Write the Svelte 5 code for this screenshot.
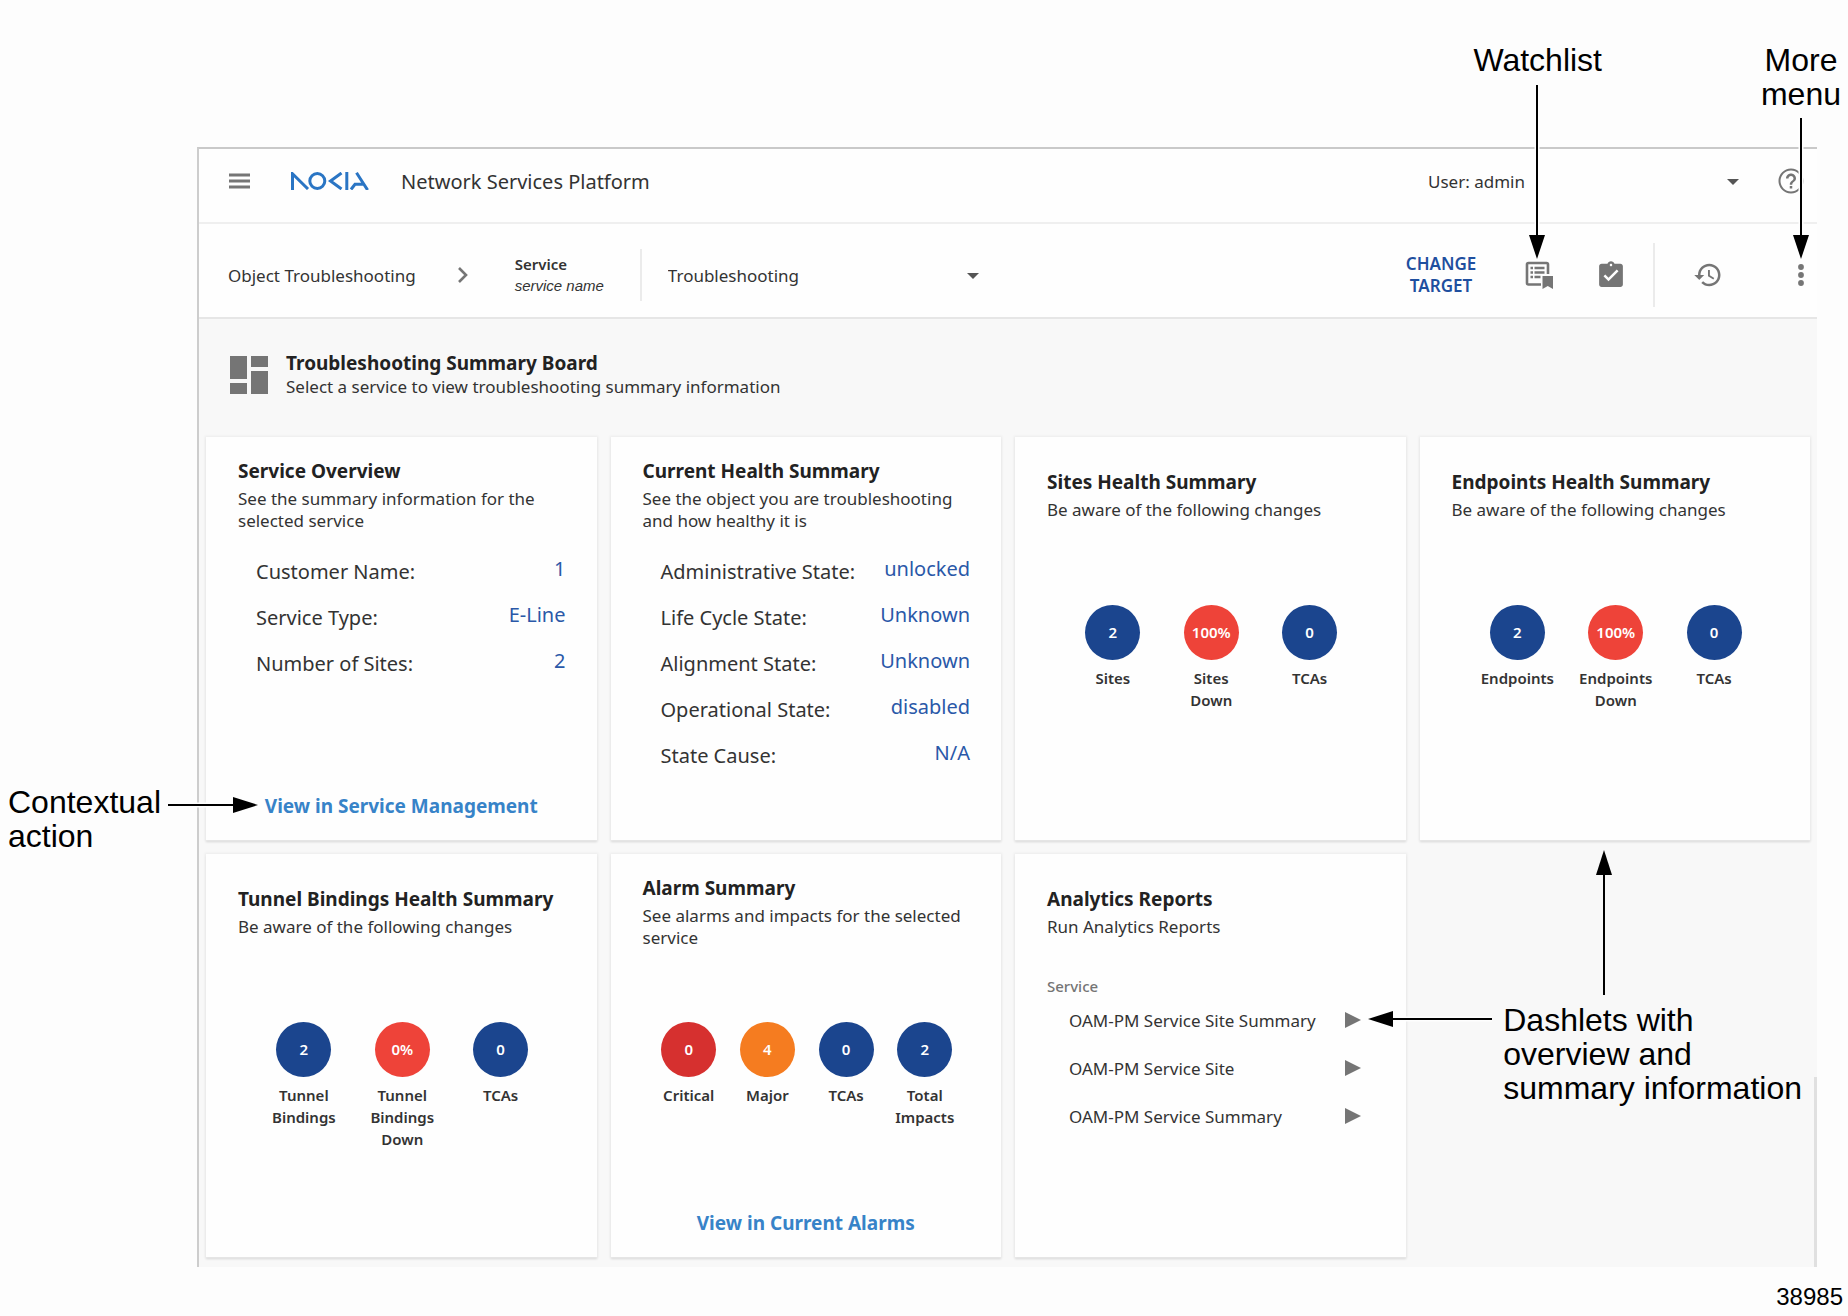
<script>
  const overview = [
    ["Customer Name:", "1"],
    ["Service Type:", "E-Line"],
    ["Number of Sites:", "2"],
  ];

  const health = [
    ["Administrative State:", "unlocked"],
    ["Life Cycle State:", "Unknown"],
    ["Alignment State:", "Unknown"],
    ["Operational State:", "disabled"],
    ["State Cause:", "N/A"],
  ];

  const reports = ["OAM-PM Service Site Summary", "OAM-PM Service Site", "OAM-PM Service Summary"];

  // a card body shows whichever of rows, counts or reports it has
  const dashlets = [
    {
      title: "Service Overview",
      text: "See the summary information for the selected service",
      rows: overview,
      action: "View in Service Management",
    },
    {
      title: "Current Health Summary",
      text: "See the object you are troubleshooting and how healthy it is",
      rows: health,
    },
    {
      title: "Sites Health Summary",
      text: "Be aware of the following changes",
      counts: [
        { value: "2", label: "Sites", tone: "blue" },
        { value: "100%", label: "Sites Down", tone: "red" },
        { value: "0", label: "TCAs", tone: "blue" },
      ],
    },
    {
      title: "Endpoints Health Summary",
      text: "Be aware of the following changes",
      counts: [
        { value: "2", label: "Endpoints", tone: "blue" },
        { value: "100%", label: "Endpoints Down", tone: "red" },
        { value: "0", label: "TCAs", tone: "blue" },
      ],
    },
    {
      title: "Tunnel Bindings Health Summary",
      text: "Be aware of the following changes",
      counts: [
        { value: "2", label: "Tunnel Bindings", tone: "blue" },
        { value: "0%", label: "Tunnel Bindings Down", tone: "red" },
        { value: "0", label: "TCAs", tone: "blue" },
      ],
    },
    {
      title: "Alarm Summary",
      text: "See alarms and impacts for the selected service",
      counts: [
        { value: "0", label: "Critical", tone: "critical" },
        { value: "4", label: "Major", tone: "major" },
        { value: "0", label: "TCAs", tone: "blue" },
        { value: "2", label: "Total Impacts", tone: "blue" },
      ],
      action: "View in Current Alarms",
    },
    {
      title: "Analytics Reports",
      text: "Run Analytics Reports",
      reports,
    },
  ];
</script>

<figure class="figure">
  <div class="app">
    <header class="topbar">
      <button class="icon-btn menu" aria-label="Menu">
        <svg width="21" height="16" viewBox="0 0 21 16"><path d="M0 2h21M0 8h21M0 14h21" stroke="#757575" stroke-width="3" /></svg>
      </button>
      <svg class="logo" width="78" height="18" viewBox="0 0 78 18" role="img" aria-label="Nokia">
        <g fill="none" stroke="#2a75c4" stroke-width="3">
          <path d="M1.5 18V1.8L17 17" />
          <circle cx="26.3" cy="9" r="7.5" />
          <path d="M50.5 1 39.5 9l11 8" />
          <path d="M55.8 0v18" />
          <path d="M65.5.8 76.6 18M60 17.5l4-5.2h9" />
        </g>
      </svg>
      <span class="product">Network Services Platform</span>
      <div class="dropdown user">
        <select aria-label="User">
          <option>User: admin</option>
        </select>
        <svg class="caret" width="12" height="6" viewBox="0 0 12 6"><path d="M0 0h12L6 6z" /></svg>
      </div>
      <button class="icon-btn help" aria-label="Help">
        <svg width="30" height="30" viewBox="0 0 24 24"><path d="M11 18h2v-2h-2v2zm1-16C6.48 2 2 6.48 2 12s4.48 10 10 10 10-4.48 10-10S17.52 2 12 2zm0 18.4c-4.6 0-8.4-3.8-8.4-8.4s3.8-8.4 8.4-8.4 8.4 3.8 8.4 8.4-3.8 8.4-8.4 8.4zM12 6c-2.21 0-4 1.79-4 4h2c0-1.1.9-2 2-2s2 .9 2 2c0 2-3 1.75-3 5h2c0-2.25 3-2.5 3-5 0-2.21-1.79-4-4-4z" /></svg>
      </button>
    </header>

    <nav class="toolbar">
      <a href="#objects" class="crumb">Object Troubleshooting</a>
      <svg class="chevron" width="11" height="16" viewBox="0 0 11 16"><path d="M2 1l7 7-7 7" fill="none" stroke="#757575" stroke-width="2.6" /></svg>
      <div class="target">
        <strong>Service</strong>
        <em>service name</em>
      </div>
      <div class="divider short"></div>
      <div class="dropdown view">
        <select aria-label="View">
          <option>Troubleshooting</option>
        </select>
        <svg class="caret" width="12" height="6" viewBox="0 0 12 6"><path d="M0 0h12L6 6z" /></svg>
      </div>
      <button class="change">CHANGE TARGET</button>
      <button class="icon-btn watch" aria-label="Watchlist">
        <svg width="30" height="30" viewBox="0 0 30 30">
          <path d="M16 24.5H3.5A1.5 1.5 0 0 1 2 23V4.500A1.500 1.500 0 0 1 3.500 3h18A1.500 1.500 0 0 1 23 4.500V14" fill="none" stroke="#757575" stroke-width="2.600" />
          <path d="M5.500 8h2.500M9.500 8h10M5.500 12.500h2.500M9.500 12.500h10M5.500 17h2.500M9.500 17h6" stroke="#757575" stroke-width="2.600" />
          <path d="M17.500 16h10.500v13l-5.250-3-5.250 3z" />
        </svg>
      </button>
      <button class="icon-btn clip" aria-label="Tasks">
        <svg width="30" height="30" viewBox="0 0 24 24"><path d="M19.500 3h-4.700C14.400 1.840 13.300 1 12 1s-2.400.84-2.820 2H4.500c-1.100 0-2 .9-2 2v14.500c0 1.100.9 2 2 2h15c1.100 0 2-.9 2-2V5c0-1.100-.9-2-2-2zM12 3c.55 0 1 .45 1 1s-.45 1-1 1-1-.45-1-1 .45-1 1-1zm-2 14l-4-4 1.410-1.410L10 14.170l6.590-6.590L18 9l-8 8z" /></svg>
      </button>
      <div class="divider tall"></div>
      <button class="icon-btn history" aria-label="History">
        <svg width="30" height="30" viewBox="0 0 24 24"><path d="M13 3c-4.970 0-9 4.030-9 9H1l3.890 3.890.07.14L9 12H6c0-3.870 3.130-7 7-7s7 3.130 7 7-3.130 7-7 7c-1.930 0-3.680-.79-4.940-2.060l-1.420 1.420C8.270 19.990 10.510 21 13 21c4.970 0 9-4.030 9-9s-4.030-9-9-9zm-1 5v5l4.280 2.540.72-1.210-3.500-2.080V8H12z" /></svg>
      </button>
      <button class="icon-btn more" aria-label="More">
        <svg width="30" height="30" viewBox="0 0 30 30"><circle cx="15" cy="7" r="2.900" /><circle cx="15" cy="15" r="2.900" /><circle cx="15" cy="23" r="2.900" /></svg>
      </button>
    </nav>

    <main class="board">
      <div class="board-head">
        <svg width="38" height="38" viewBox="0 0 38 38" fill="#757575"><path d="M0 0h17v23H0zM21 0h17v11H21zM0 27h17v11H0zM21 15h17v23H21z" /></svg>
        <div>
          <h1>Troubleshooting Summary Board</h1>
          <p>Select a service to view troubleshooting summary information</p>
        </div>
      </div>

      <div class="grid">
        {#each dashlets as d}
          <section class="card">
            <div class="card-head">
              <h2>{d.title}</h2>
              <p>{d.text}</p>
            </div>
            {#if d.rows}
              <dl class="rows">
                {#each d.rows as [name, value]}
                  <div class="row">
                    <dt>{name}</dt>
                    <dd>{value}</dd>
                  </div>
                {/each}
              </dl>
            {/if}
            {#if d.counts}
              <div class="counts">
                {#each d.counts as c}
                  <div class="count">
                    <span class="circle {c.tone}">{c.value}</span>
                    <span class="label">{c.label}</span>
                  </div>
                {/each}
              </div>
            {/if}
            {#if d.reports}
              <div class="reports">
                <h3>Service</h3>
                {#each d.reports as r}
                  <div class="report">
                    <span>{r}</span>
                    <button class="icon-btn" aria-label="Run {r}">
                      <svg width="16" height="16" viewBox="0 0 16 16"><path d="M0 0l16 8-16 8z" /></svg>
                    </button>
                  </div>
                {/each}
              </div>
            {/if}
            {#if d.action}
              <a href="#open" class="action">{d.action}</a>
            {/if}
          </section>
        {/each}
      </div>
      <div class="scroll-thumb"></div>
    </main>
  </div>

  <figcaption>38985</figcaption>

  <!-- callouts over the page -->
  <div class="callout watchlist">Watchlist</div>
  <svg class="arrow watchlist-arrow" width="16" height="174" viewBox="0 0 16 174">
    <path class="halo" d="M8 0v150" /><path class="line" d="M8 0v152" /><path d="M0 150h16L8 174z" />
  </svg>

  <div class="callout more-menu">More<br />menu</div>
  <svg class="arrow more-arrow" width="16" height="141" viewBox="0 0 16 141">
    <path class="halo" d="M8 0v117" /><path class="line" d="M8 0v119" /><path d="M0 117h16l-8 24z" />
  </svg>

  <div class="callout contextual">Contextual<br />action</div>
  <svg class="arrow contextual-arrow" width="90" height="16" viewBox="0 0 90 16">
    <path class="halo" d="M0 8h65" /><path class="line" d="M0 8h67" /><path d="M65 0v16l25-8z" />
  </svg>

  <div class="callout info">Dashlets with<br />overview and<br />summary information</div>
  <svg class="arrow info-up" width="16" height="145" viewBox="0 0 16 145">
    <path class="line" d="M8 23v122" /><path d="M0 25h16L8 0z" />
  </svg>
  <svg class="arrow info-left" width="124" height="16" viewBox="0 0 124 16">
    <path class="halo" d="M24 8h100" /><path class="line" d="M22 8h102" /><path d="M25 0v16L0 8z" />
  </svg>
</figure>

<style>
  :global(body) {
    background: #fdfdfd;
  }

  .figure {
    position: relative;
    margin: 0;
    padding: 147px 31px 7px 197px;
    font-family: "Noto Sans", "Open Sans", sans-serif;
    font-size: 17px;
    color: #333;
  }

  h1, h2, h3, p, dl, dd {
    margin: 0;
  }

  button, select {
    font: inherit;
    color: inherit;
    background: none;
    border: 0;
    padding: 0;
    margin: 0;
  }

  a {
    text-decoration: none;
  }

  svg {
    display: block;
    flex: none;
  }

  .app {
    border-top: 2px solid #c9c9c9;
    border-left: 2px solid #cdcdcd;
    background: #fefefe;
  }

  .icon-btn {
    display: flex;
    fill: #757575;
  }

  /* top bar */
  .topbar {
    display: flex;
    align-items: center;
    height: 64px;
    padding: 0 11px 9px 30px;
    border-bottom: 2px solid #efefef;
  }
  .logo {
    margin-left: 41px;
  }
  .product {
    margin-left: 32px;
    font-size: 20px;
  }
  .dropdown {
    position: relative;
    width: 311px;
  }
  .dropdown select {
    appearance: none;
    width: 100%;
    height: 32px;
  }
  .caret {
    position: absolute;
    right: 0;
    top: 14px;
    fill: #555;
    pointer-events: none;
  }
  .user {
    margin-left: auto;
  }
  .help {
    margin-left: 37px;
  }

  /* toolbar */
  .toolbar {
    display: flex;
    align-items: center;
    height: 84px;
    padding: 9px 1px 0 29px;
    border-bottom: 2px solid #e6e6e6;
  }
  .crumb {
    color: #333;
  }
  .chevron {
    margin-left: 41px;
  }
  .target {
    display: flex;
    flex-direction: column;
    margin-left: 47px;
    line-height: 21px;
  }
  .target strong {
    font-size: 15px;
    font-weight: 600;
  }
  .target em {
    font-family: "Liberation Sans", Arial, sans-serif;
    font-size: 15px;
  }
  .divider {
    width: 2px;
    background: #ebebeb;
  }
  .short {
    height: 52px;
    margin: 0 26px 0 36px;
  }
  .tall {
    height: 64px;
    margin: 0 38px 0 27px;
  }
  .change {
    width: 80px;
    margin-left: auto;
    font-weight: 600;
    line-height: 22px;
    color: #1f4f9f;
  }
  .watch {
    margin-left: 44px;
  }
  .clip {
    margin-left: 41px;
  }
  .more {
    margin-left: 63px;
  }

  /* board */
  .board {
    position: relative;
    padding: 36px 7px 10px;
    background: #f8f8f8;
  }
  .board-head {
    display: flex;
    align-items: center;
    gap: 18px;
    height: 40px;
    margin-bottom: 42px;
    padding-left: 24px;
  }
  .board-head h1 {
    font-size: 19px;
    line-height: 24px;
    color: #222;
  }
  .board-head p {
    line-height: 24px;
  }

  .grid {
    display: grid;
    grid-template-columns: repeat(4, 1fr);
    gap: 14px;
  }
  .card {
    display: flex;
    flex-direction: column;
    min-height: 403px;
    box-sizing: border-box;
    background: #fefefe;
    box-shadow: 0 0 2px 1px #ececec, 0 2px 2px #d4d4d4;
  }
  .card-head {
    display: flex;
    flex-direction: column;
    justify-content: center;
    gap: 4px;
    height: 115px;
    padding: 0 28px 0 32px;
  }
  .card-head h2 {
    font-size: 19px;
    line-height: 26px;
    color: #222;
  }
  .card-head p {
    line-height: 22px;
  }

  .rows {
    padding: 0 31px 0 50px;
    font-size: 20px;
  }
  .row {
    display: flex;
    justify-content: space-between;
    height: 46px;
    line-height: 40px;
  }
  .row dd {
    line-height: 34px;
    color: #2a58a8;
  }

  .counts {
    display: flex;
    justify-content: space-evenly;
    padding: 53px 25px 0 27px;
  }
  .count {
    display: flex;
    flex-direction: column;
    align-items: center;
    gap: 7px;
    width: 55px;
    font-size: 15px;
    font-weight: 600;
    line-height: 22px;
    text-align: center;
  }
  .circle {
    width: 55px;
    line-height: 55px;
    border-radius: 50%;
    color: #fff;
  }
  .label {
    width: min-content;
  }
  .blue {
    background: #1b458e;
  }
  .red {
    background: #ee4339;
  }
  .critical {
    background: #d6302f;
  }
  .major {
    background: #f57c20;
  }

  .reports {
    padding: 8px 45px 0 32px;
  }
  .reports h3 {
    font-size: 15px;
    font-weight: 500;
    line-height: 19px;
    color: #757575;
  }
  .report {
    display: flex;
    justify-content: space-between;
    align-items: center;
    height: 48px;
    padding-left: 22px;
  }

  .action {
    margin: auto auto 21px;
    font-size: 19px;
    font-weight: 700;
    line-height: 26px;
    color: #3783c8;
  }

  .scroll-thumb {
    position: absolute;
    right: 0;
    bottom: 0;
    width: 3px;
    height: 20%;
    background: #e0e0e0;
  }

  figcaption {
    margin: 16px -26px 0 0;
    font: 24px/28px "Liberation Sans", Arial, sans-serif;
    text-align: right;
    color: #000;
  }

  /* callouts */
  .callout {
    position: absolute;
    font: 32px/34px "Liberation Sans", Arial, sans-serif;
    color: #000;
    white-space: nowrap;
  }
  .arrow {
    position: absolute;
    pointer-events: none;
  }
  .line {
    stroke: #000;
    stroke-width: 2;
  }
  .halo {
    stroke: #fefefe;
    stroke-width: 5;
  }
  .watchlist {
    top: 43px;
    right: 246px;
  }
  .watchlist-arrow {
    top: 85px;
    right: 303px;
  }
  .more-menu {
    top: 43px;
    right: 7px;
    text-align: center;
  }
  .more-arrow {
    top: 118px;
    right: 39px;
  }
  .contextual {
    top: 785px;
    left: 8px;
  }
  .contextual-arrow {
    top: 797px;
    left: 168px;
  }
  .info {
    top: 1003px;
    right: 46px;
  }
  .info-up {
    top: 850px;
    right: 236px;
  }
  .info-left {
    top: 1011px;
    right: 356px;
  }
</style>
